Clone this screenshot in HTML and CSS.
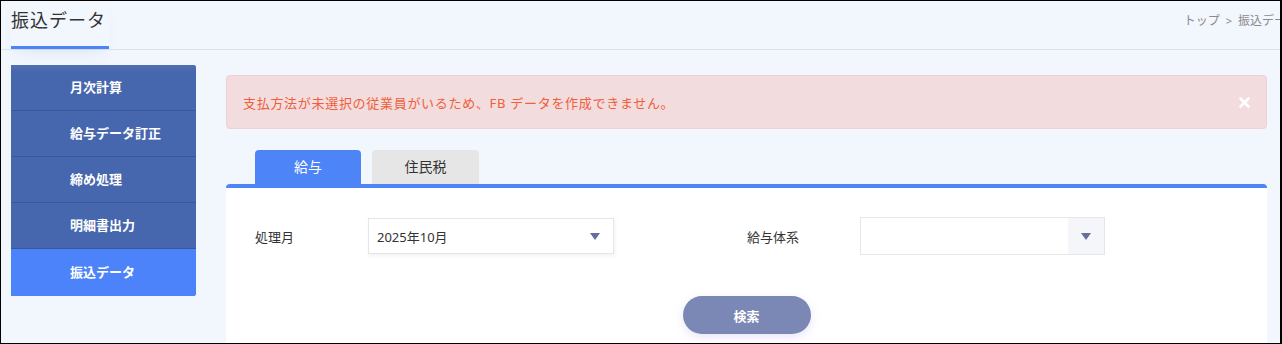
FILE: index.html
```html
<!DOCTYPE html>
<html lang="ja">
<head>
  <meta charset="UTF-8"/>
  <title>振込データ</title>
  <link rel="stylesheet" href="styles.css">
</head>
<body>
<div class="frame">

  <!-- Page Header -->
  <header class="page-head">
    <h1 class="page-title">振込データ</h1>
    <div class="crumbs">トップ<span class="sep">&gt;</span>振込データ</div>
  </header>

  <div class="layout">
    <!-- Side Menu -->
    <nav class="side-menu">
      <a class="menu-item">月次計算</a>
      <a class="menu-item">給与データ訂正</a>
      <a class="menu-item">締め処理</a>
      <a class="menu-item">明細書出力</a>
      <a class="menu-item active">振込データ</a>
    </nav>

    <main class="main">
      <div class="alert">
        <span class="alert-text">支払方法が未選択の従業員がいるため、FB データを作成できません。</span>
        <svg class="alert-close" width="11" height="11" viewBox="0 0 11 11">
          <path d="M1.5 1.5 L9.5 9.5 M9.5 1.5 L1.5 9.5" stroke="#fff" stroke-width="2.6" stroke-linecap="round"/>
        </svg>
      </div>

      <div class="tabs">
        <div class="tab active">給与</div>
        <div class="tab">住民税</div>
      </div>

      <section class="panel">
        <div class="form-row">
          <label class="field-label">処理月</label>
          <div class="select shadowed">
            <span class="select-value">2025年10月</span>
            <span class="caret"></span>
          </div>
          <label class="field-label second">給与体系</label>
          <div class="select boxed">
            <span class="select-value"></span>
            <span class="caret-box"><span class="caret"></span></span>
          </div>
        </div>
        <div class="actions">
          <button class="search-btn">検索</button>
        </div>
      </section>
    </main>
  </div>

</div>
</body>
</html>
```

FILE: styles.css
```css
html, body {
  margin: 0; padding: 0; overflow: hidden; background: #f2f6fd;
}
body {
  font-family: "Noto Sans", "Noto Sans CJK JP", sans-serif;
  color: #333;
}
.frame {
  box-sizing: border-box;
  width: 1282px;
  height: 344px;
  border: 1px solid #000;
  border-right-width: 2px;
  overflow: hidden;
  background: #f2f6fd;
}

/* header */
.page-head {
  display: flex;
  align-items: flex-start;
  justify-content: space-between;
  height: 48px;
  border-bottom: 1px solid #dde2ea;
  padding-left: 10px;
  margin-right: -18px;
}
.page-title {
  margin: 0;
  padding-top: 6px;
  height: 39px;
  width: 98px;
  font-size: 18px;
  font-weight: normal;
  letter-spacing: 1px;
  line-height: 26px;
  color: #333;
  border-bottom: 3px solid #4d84f7;
  box-shadow: 0 8px 14px -6px rgba(77,132,247,.15);
}
.crumbs {
  padding-top: 10px;
  font-size: 12px;
  color: #8a8a8a;
  white-space: nowrap;
}
.crumbs .sep {
  margin: 0 6px;
  font-size: 11px;
}

/* body layout */
.layout {
  display: flex;
  align-items: flex-start;
  padding: 15px 0 0 10px;
}
.side-menu {
  width: 185px;
  flex: none;
  display: flex;
  flex-direction: column;
  background: #4666ad;
  border-radius: 0 3px 3px 0;
  overflow: hidden;
}
.menu-item {
  display: block;
  height: 45px;
  line-height: 45px;
  padding-left: 59px;
  border-bottom: 1px solid #3a5797;
  color: #fff;
  font-size: 13px;
  font-weight: bold;
  cursor: pointer;
}
.menu-item:first-child {
  background: linear-gradient(#5270b3, #4666ad 8px);
}
.menu-item.active {
  background: #4c83fb;
  border-bottom: none;
  height: 47px;
  line-height: 47px;
}

.main {
  width: 1041px;
  margin: 10px 0 0 30px;
  flex: none;
}
.alert {
  display: flex;
  align-items: center;
  justify-content: space-between;
  box-sizing: border-box;
  height: 54px;
  padding: 0 16px 0 16px;
  background: #f2dcdd;
  border: 1px solid #efd0d3;
  border-radius: 4px;
  color: #ef5f3b;
  font-size: 13px;
}
.alert-text {
  letter-spacing: 0.7px;
}
.alert-close {
  margin-right: 0;
}

/* tabs */
.tabs {
  display: flex;
  gap: 11px;
  margin-top: 21px;
  padding-left: 29px;
}
.tab {
  width: 107px;
  height: 34px;
  line-height: 34px;
  text-align: center;
  font-size: 14px;
  background: #e6e6e6;
  color: #333;
  border-radius: 4px 4px 0 0;
}
.tab.active {
  width: 106px;
  background: #4d84f7;
  color: #fff;
}

.panel {
  background: #fff;
  border-top: 4px solid #4d84f7;
  border-radius: 4px 4px 0 0;
  height: 160px;
  padding-top: 29px;
  box-sizing: border-box;
}
.form-row {
  display: flex;
  align-items: center;
  padding-left: 29px;
}
.field-label {
  width: 113px;
  font-size: 13px;
  color: #333;
}
.field-label.second {
  margin-left: 133px;
}
.select {
  box-sizing: border-box;
  display: flex;
  align-items: center;
  justify-content: space-between;
  height: 36px;
  border: 1px solid #e6e6e6;
  background: #fff;
  font-size: 13px;
}
.select.shadowed {
  width: 246px;
  padding: 0 13px 0 8px;
  box-shadow: 1px 2px 4px rgba(0,0,0,.06);
}
.select.boxed {
  width: 245px;
  height: 38px;
  padding-left: 9px;
}
.caret {
  width: 0; height: 0;
  border-left: 5px solid transparent;
  border-right: 5px solid transparent;
  border-top: 7px solid #686d9c;
}
.caret-box {
  display: flex;
  align-items: center;
  justify-content: center;
  width: 36px;
  height: 100%;
  background: #f5f6fa;
}

.actions {
  display: flex;
  justify-content: center;
  margin-top: 41px;
}
.search-btn {
  width: 128px;
  height: 38px;
  border: none;
  border-radius: 19px;
  background: #7b87b4;
  color: #fff;
  font-family: inherit;
  font-size: 13px;
  font-weight: bold;
  box-shadow: 0 3px 10px rgba(123,110,220,.18);
  cursor: pointer;
}
```
